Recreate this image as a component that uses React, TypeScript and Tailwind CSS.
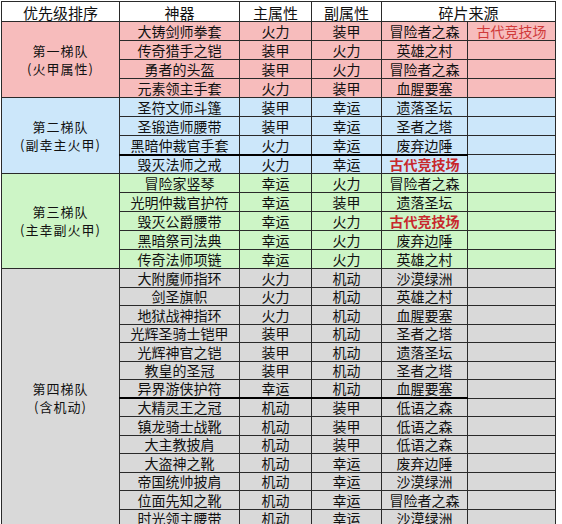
type Row = {
  name: string;
  main: string;
  sub: string;
  src: string;
  srcRed?: boolean;
  extra?: string;
  thick?: boolean;
};

type Tier = {
  title: string;
  note: string;
  bg: string;
  rowH: string;
  rows: Row[];
};

const tiers: Tier[] = [
  {
    title: '第一梯队',
    note: '(火甲属性)',
    bg: 'bg-[#f7bcbc]',
    rowH: 'h-[19px]',
    rows: [
      { name: '大铸剑师拳套', main: '火力', sub: '装甲', src: '冒险者之森', extra: '古代竞技场' },
      { name: '传奇猎手之铠', main: '装甲', sub: '火力', src: '英雄之村' },
      { name: '勇者的头盔', main: '装甲', sub: '火力', src: '冒险者之森' },
      { name: '元素领主手套', main: '火力', sub: '装甲', src: '血腥要塞' },
    ],
  },
  {
    title: '第二梯队',
    note: '(副幸主火甲)',
    bg: 'bg-[#cce7fa]',
    rowH: 'h-[19px]',
    rows: [
      { name: '圣符文师斗篷', main: '装甲', sub: '幸运', src: '遗落圣坛' },
      { name: '圣锻造师腰带', main: '装甲', sub: '幸运', src: '圣者之塔' },
      { name: '黑暗仲裁官手套', main: '火力', sub: '幸运', src: '废弃边陲', thick: true },
      { name: '毁灭法师之戒', main: '火力', sub: '幸运', src: '古代竞技场', srcRed: true },
    ],
  },
  {
    title: '第三梯队',
    note: '(主幸副火甲)',
    bg: 'bg-[#cdf5c6]',
    rowH: 'h-[19px]',
    rows: [
      { name: '冒险家竖琴', main: '幸运', sub: '火力', src: '冒险者之森' },
      { name: '光明仲裁官护符', main: '幸运', sub: '装甲', src: '遗落圣坛' },
      { name: '毁灭公爵腰带', main: '幸运', sub: '火力', src: '古代竞技场', srcRed: true },
      { name: '黑暗祭司法典', main: '幸运', sub: '火力', src: '废弃边陲' },
      { name: '传奇法师项链', main: '幸运', sub: '火力', src: '英雄之村' },
    ],
  },
  {
    title: '第四梯队',
    note: '(含机动)',
    bg: 'bg-[#d9d9d9]',
    rowH: 'h-[18.5px]',
    rows: [
      { name: '大附魔师指环', main: '火力', sub: '机动', src: '沙漠绿洲' },
      { name: '剑圣旗帜', main: '火力', sub: '机动', src: '英雄之村' },
      { name: '地狱战神指环', main: '火力', sub: '机动', src: '血腥要塞' },
      { name: '光辉圣骑士铠甲', main: '装甲', sub: '机动', src: '圣者之塔' },
      { name: '光辉神官之铠', main: '装甲', sub: '机动', src: '遗落圣坛' },
      { name: '教皇的圣冠', main: '装甲', sub: '机动', src: '圣者之塔' },
      { name: '异界游侠护符', main: '幸运', sub: '机动', src: '血腥要塞', thick: true },
      { name: '大精灵王之冠', main: '机动', sub: '装甲', src: '低语之森' },
      { name: '镇龙骑士战靴', main: '机动', sub: '装甲', src: '低语之森' },
      { name: '大主教披肩', main: '机动', sub: '装甲', src: '低语之森' },
      { name: '大盗神之靴', main: '机动', sub: '幸运', src: '废弃边陲' },
      { name: '帝国统帅披肩', main: '机动', sub: '幸运', src: '沙漠绿洲' },
      { name: '位面先知之靴', main: '机动', sub: '幸运', src: '冒险者之森' },
      { name: '时光领主腰带', main: '机动', sub: '幸运', src: '沙漠绿洲' },
    ],
  },
];

const cell = 'border border-[#2a2a2a] p-0 text-center align-bottom whitespace-nowrap leading-[17px]';

export default function App() {
  return (
    <div
      className="h-[524px] w-[562px] overflow-hidden bg-white pl-px pt-px text-[14px] text-[#111]"
      style={{ fontFamily: '"Noto Sans CJK SC", "Noto Sans", sans-serif' }}
    >
      <table className="w-[554px] table-fixed border-collapse">
        <colgroup>
          <col className="w-[118px]" />
          <col className="w-[120px]" />
          <col className="w-[72px]" />
          <col className="w-[70px]" />
          <col className="w-[86px]" />
          <col className="w-[88px]" />
        </colgroup>
        <thead>
          <tr className="h-[20px] bg-white text-[15px]">
            <th className={`${cell} font-normal`}>优先级排序</th>
            <th className={`${cell} font-normal`}>神器</th>
            <th className={`${cell} font-normal`}>主属性</th>
            <th className={`${cell} font-normal`}>副属性</th>
            <th className={`${cell} font-normal`} colSpan={2}>
              碎片来源
            </th>
          </tr>
        </thead>
        <tbody>
          {tiers.map((tier) =>
            tier.rows.map((row, i) => {
              const line = row.thick ? 'border-b-2 border-b-black' : '';
              return (
                <tr key={row.name} className={`${tier.rowH} ${tier.bg}`}>
                  {i === 0 && (
                    <td
                      className={`${cell} align-middle text-[13px] leading-[18px] tracking-[1px]`}
                      rowSpan={tier.rows.length}
                    >
                      <div>{tier.title}</div>
                      <div>{tier.note}</div>
                    </td>
                  )}
                  <td className={`${cell} ${line}`}>{row.name}</td>
                  <td className={`${cell} ${line}`}>{row.main}</td>
                  <td className={`${cell} ${line}`}>{row.sub}</td>
                  <td className={`${cell} ${line} ${row.srcRed ? 'font-bold text-[#c8282c]' : ''}`}>
                    {row.src}
                  </td>
                  <td className={`${cell} text-[#d03a3a]`}>{row.extra ?? ''}</td>
                </tr>
              );
            })
          )}
        </tbody>
      </table>
    </div>
  );
}
